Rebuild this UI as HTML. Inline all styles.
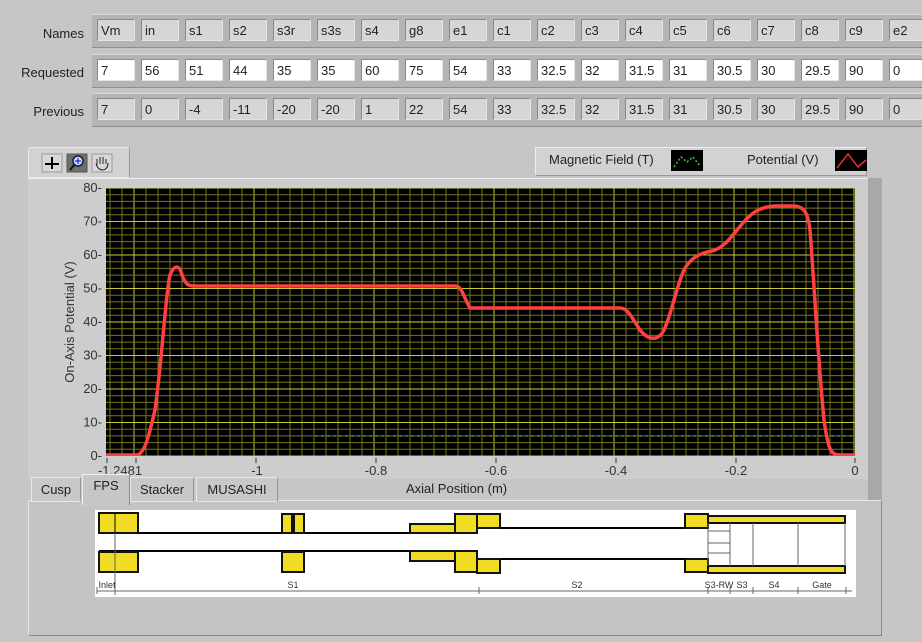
<!DOCTYPE html>
<html><head><meta charset="utf-8"><style>
body{margin:0;width:922px;height:642px;background:#c6c6c6;font-family:"Liberation Sans",sans-serif;overflow:hidden;position:relative}
.lbl{position:absolute;font-size:13px;color:#222;text-align:right;width:84px;left:0}
.strip{position:absolute;left:92px;width:830px;height:32px;background:#b4b4b4;border-top:1px solid #d8d8d8;border-bottom:1px solid #8e8e8e}
.c{position:absolute;height:22px;border:1px solid #8a8a8a;border-right-color:#e4e4e4;border-bottom-color:#e4e4e4;font-size:13px;line-height:22px;padding-left:3px;box-sizing:border-box;width:38px;color:#222}
.g{background:#d6d6d6}.w{background:#fff}
.ab{position:absolute}
</style></head><body>
<div class="lbl" style="top:26px">Names</div>
<div class="lbl" style="top:65px">Requested</div>
<div class="lbl" style="top:104px">Previous</div>
<div class="strip" style="top:14px"></div>
<div class="strip" style="top:54px"></div>
<div class="strip" style="top:93px"></div>
<div id="cells"></div>
<div class="ab" style="left:28px;top:147px;width:100px;height:29px;background:#d2d2d2;border:1px solid #e8e8e8;border-right-color:#999;border-radius:3px 3px 0 0"></div>
<svg class="ab" style="left:40px;top:153px" width="80" height="20">
<rect x="2" y="1" width="20" height="18" fill="#d8d8d8" stroke="#999"/>
<path d="M12 4V16M5 11H19" stroke="#000" stroke-width="2"/>
<rect x="27" y="1" width="20" height="18" fill="#6e6e6e" stroke="#555"/>
<circle cx="38" cy="8" r="5" fill="#cde" stroke="#123" stroke-width="1.5"/><path d="M35 8H41M38 5V11" stroke="#00f"/><path d="M34 12L30 17" stroke="#111" stroke-width="2"/>
<rect x="52" y="1" width="20" height="18" fill="#d8d8d8" stroke="#999"/>
<path d="M57 12V6M60 11V4M63 11V4M66 11V6M56 11Q58 17 63 17Q68 16 68 10" stroke="#222" fill="none"/>
</svg>
<div class="ab" style="left:535px;top:147px;width:330px;height:27px;background:#d2d2d2;border:1px solid #eee;border-right-color:#999;border-bottom-color:#999"></div>
<div class="ab" style="left:549px;top:152px;font-size:13px;color:#222">Magnetic Field (T)</div>
<div class="ab" style="left:747px;top:152px;font-size:13px;color:#222">Potential (V)</div>
<svg class="ab" style="left:671px;top:150px" width="32" height="21"><rect width="32" height="21" fill="#000"/><path d="M3 17L10 7L16 12L22 7L29 16" stroke="#3c3" stroke-dasharray="2 2" fill="none" stroke-width="1.5"/></svg>
<svg class="ab" style="left:835px;top:150px" width="32" height="21"><rect width="32" height="21" fill="#000"/><path d="M2 18L13 4L23 17L31 10" stroke="#d33" fill="none" stroke-width="1.5"/></svg>
<div class="ab" style="left:28px;top:178px;width:852px;height:300px;background:#cdcdcd;border-top:1px solid #eee"></div>
<div class="ab" style="left:868px;top:178px;width:14px;height:322px;background:#a8a8a8"></div>
<svg class="ab" style="left:0;top:0" width="922" height="480">
<defs><clipPath id="cp"><rect x="106" y="188" width="749" height="268"/></clipPath></defs>
<rect x="106" y="188" width="749" height="268" fill="#000"/>
<g id="grid" clip-path="url(#cp)"></g>
<line x1="315" y1="436" x2="855" y2="436" stroke="#4c4" stroke-dasharray="3 3" stroke-width="1"/>
<path clip-path="url(#cp)" d="M106 455L136 455C144 455 148 440 155 410C162 360 166 290 170 275C175 263 180 266 182 275C186 285 188 286 195 286L455 286C462 286 463 296 470 308L620 308C628 308 632 318 640 330C648 340 658 342 664 330C672 312 676 288 684 270C690 258 700 253 712 251C724 248 732 236 742 224C752 212 760 207 775 206L793 206C805 206 808 214 810 230C814 280 818 360 824 420C828 448 830 455 840 455L855 455" stroke="#ff4040" stroke-width="3.5" fill="none"/>
<g font-size="13" fill="#333" text-anchor="end" id="yl"></g>
<text transform="translate(74 322) rotate(-90)" text-anchor="middle" font-size="13" fill="#333">On-Axis Potential (V)</text>
<g font-size="13" fill="#333" text-anchor="middle">
<text x="120" y="475">-1.2481</text><text x="257" y="475">-1</text><text x="376" y="475">-0.8</text><text x="496" y="475">-0.6</text><text x="616" y="475">-0.4</text><text x="736" y="475">-0.2</text><text x="855" y="475">0</text>
</g>
<g stroke="#333"><path d="M107 458V463M136 458V463M256 458V463M376 458V463M496 458V463M616 458V463M736 458V463M855 458V463"/></g>
</svg>
<div class="ab" style="left:28px;top:500px;width:852px;height:134px;background:#c4c4c4;border:1px solid #e4e4e4;border-right-color:#888;border-bottom-color:#888"></div>
<div class="ab" style="left:31px;top:477px;width:48px;height:23px;background:#c8c8c8;border:1px solid #e8e8e8;border-right-color:#999;font-size:13px;line-height:23px;text-align:center;color:#222">Cusp</div>
<div class="ab" style="left:82px;top:474px;width:46px;height:30px;background:#c6c6c6;border:1px solid #eee;border-right-color:#888;border-bottom:none;font-size:13px;line-height:22px;text-align:center;color:#222">FPS</div>
<div class="ab" style="left:130px;top:477px;width:62px;height:23px;background:#c8c8c8;border:1px solid #e8e8e8;border-right-color:#999;font-size:13px;line-height:23px;text-align:center;color:#222">Stacker</div>
<div class="ab" style="left:196px;top:477px;width:80px;height:23px;background:#c8c8c8;border:1px solid #e8e8e8;border-right-color:#999;font-size:13px;line-height:23px;text-align:center;color:#222">MUSASHI</div>
<div class="ab" style="left:406px;top:481px;font-size:13px;color:#222">Axial Position (m)</div>
<svg class="ab" style="left:0;top:0" width="922" height="642">
<rect x="95" y="510" width="761" height="87" fill="#fff"/>
<g stroke="#000" stroke-width="2" fill="none">
<path d="M99 533H282M304 533H410M99 551H410M410 551H455M500 528H685M477 559H708"/>
</g>
<g fill="#f0dc22" stroke="#111" stroke-width="2">
<rect x="99" y="513" width="39" height="20"/><rect x="99" y="552" width="39" height="20"/>
<rect x="282" y="514" width="10" height="19"/><rect x="294" y="514" width="10" height="19"/><rect x="282" y="552" width="22" height="20"/>
<rect x="410" y="524" width="45" height="9"/><rect x="455" y="514" width="22" height="19"/><rect x="477" y="514" width="23" height="14"/>
<rect x="410" y="551" width="45" height="10"/><rect x="455" y="551" width="22" height="21"/><rect x="477" y="559" width="23" height="14"/>
<rect x="685" y="514" width="23" height="14"/><rect x="685" y="559" width="23" height="13"/>
<rect x="708" y="516" width="137" height="7"/><rect x="708" y="566" width="137" height="7"/>
</g>
<g stroke="#000" stroke-width="1"><path d="M115 513V533M115 552V572"/></g>
<g stroke="#666" stroke-width="1" fill="none"><path d="M115 533V595M708 523V566M730 523V566M753 523V566M798 523V566M845 523V566M708 531H730M708 543H730M708 553H730"/><path d="M97 591H852M97 587V594M479 587V594M708 587V594M730 587V594M753 587V594M798 587V594M846 587V594"/></g>
<g font-size="9" fill="#333" font-family="Liberation Sans Narrow, Liberation Sans, sans-serif" text-anchor="middle">
<text x="107" y="588">Inlet</text><text x="293" y="588">S1</text><text x="577" y="588">S2</text><text x="719" y="588">S3-RW</text><text x="742" y="588">S3</text><text x="774" y="588">S4</text><text x="822" y="588">Gate</text>
</g>
</svg>
<script>
var names=["Vm","in","s1","s2","s3r","s3s","s4","g8","e1","c1","c2","c3","c4","c5","c6","c7","c8","c9","e2"];
var req=["7","56","51","44","35","35","60","75","54","33","32.5","32","31.5","31","30.5","30","29.5","90","0"];
var prev=["7","0","-4","-11","-20","-20","1","22","54","33","32.5","32","31.5","31","30.5","30","29.5","90","0"];
var h="";
for(var i=0;i<19;i++){var x=97+i*44;
h+='<div class="c g" style="left:'+x+'px;top:19px">'+names[i]+'</div>';
h+='<div class="c w" style="left:'+x+'px;top:59px">'+req[i]+'</div>';
h+='<div class="c g" style="left:'+x+'px;top:98px">'+prev[i]+'</div>';}
document.getElementById("cells").innerHTML=h;
var g=document.getElementById("grid"),s="";
for(var x=134-120;x<860;x+=12){var maj=((x-134)%120===0);s+='<line x1="'+x+'" y1="188" x2="'+x+'" y2="456" stroke="'+(maj?'#c8c838':'#76761c')+'" stroke-width="1"/>';}
for(var k=0;k<=40;k++){var y=456-k*6.7;var maj=(k%5===0);s+='<line x1="106" y1="'+y+'" x2="855" y2="'+y+'" stroke="'+(maj?'#c8c838':'#76761c')+'" stroke-width="1"/>';}
g.innerHTML=s;
var yl=document.getElementById("yl"),t="";
for(var v=0;v<=80;v+=10){var y=456-v*3.35;t+='<text x="102" y="'+(y+4)+'">'+v+'-</text>';}
yl.innerHTML=t;
</script>
</body></html>
